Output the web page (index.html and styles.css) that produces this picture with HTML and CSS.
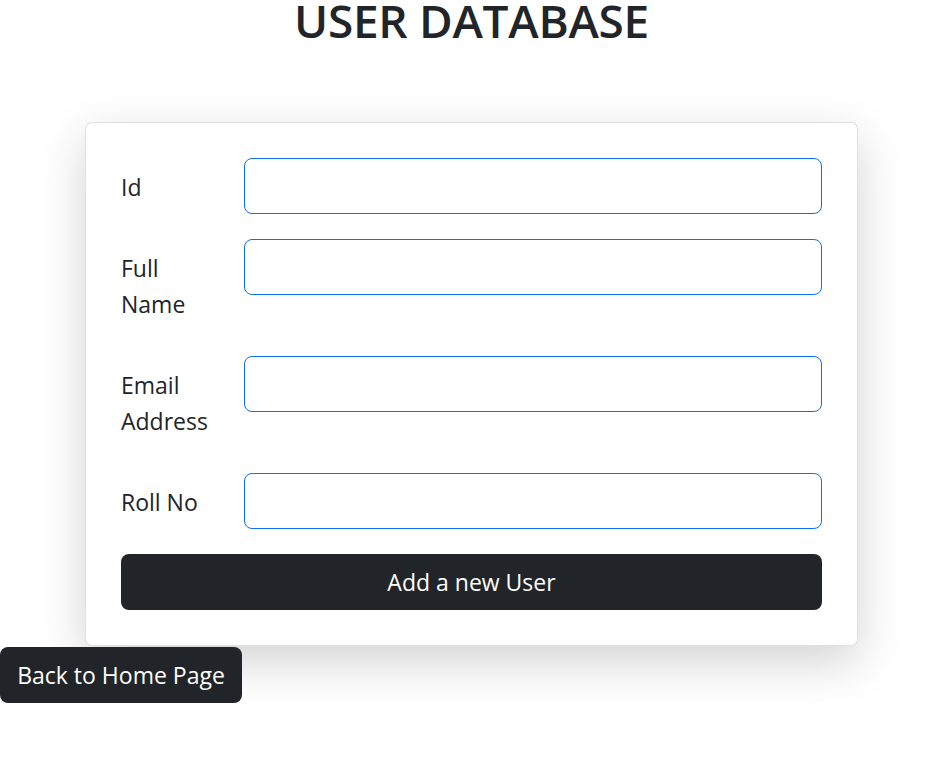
FILE: index.html
```html
<!DOCTYPE html>
<html lang="en">
<head>
<meta charset="utf-8">
<title>User Database</title>
<link rel="stylesheet" href="styles.css">
</head>
<body>
<h1 class="title">USER DATABASE</h1>
<div class="card">
  <form class="form">
    <div class="row">
      <label class="label" for="id">Id</label>
      <input class="input" id="id" type="text">
    </div>
    <div class="row">
      <label class="label" for="name">Full Name</label>
      <input class="input" id="name" type="text">
    </div>
    <div class="row">
      <label class="label" for="email">Email Address</label>
      <input class="input" id="email" type="text">
    </div>
    <div class="row">
      <label class="label" for="roll">Roll No</label>
      <input class="input" id="roll" type="text">
    </div>
    <button class="btn btn-block" type="button">Add a new User</button>
  </form>
</div>
<button class="btn btn-back" type="button">Back to Home Page</button>
</body>
</html>
```
FILE: styles.css
```css
* { box-sizing: border-box; }
html, body { margin: 0; padding: 0; }
body {
  font-family: "Open Sans", "Noto Sans", sans-serif;
  color: #212529;
  background: #fff;
}
.title {
  margin: 0;
  font-size: 46px;
  font-weight: 600;
  line-height: 40px;
  text-align: center;
  letter-spacing: -0.3px;
}
.card {
  width: 773px;
  margin: 82px auto 1px;
  padding: 35px 35px 35px;
  border: 1px solid rgba(0,0,0,.12);
  border-radius: 7px;
  background: #fff;
  box-shadow: 0 16px 48px rgba(0,0,0,.175);
}
.form { display: flex; flex-direction: column; gap: 25px; }
.row {
  display: grid;
  grid-template-columns: 97px 1fr;
  column-gap: 26px;
  align-items: start;
}
.label {
  font-size: 23px;
  line-height: 36px;
  padding-top: 11px;
  padding-bottom: 9px;
}
.input {
  height: 56px;
  width: 100%;
  border: 1px solid #0d6efd;
  border-radius: 8px;
  padding: 8px 16px;
  font: inherit;
  font-size: 23px;
  outline: none;
  background: #fff;
}
.btn {
  display: block;
  height: 56px;
  border: 0;
  border-radius: 8px;
  background: #212529;
  color: #fff;
  font-family: inherit;
  font-size: 23px;
  padding: 0 16px;
}
.btn-block { width: 100%; }
.btn-back { width: 242px; }
```
